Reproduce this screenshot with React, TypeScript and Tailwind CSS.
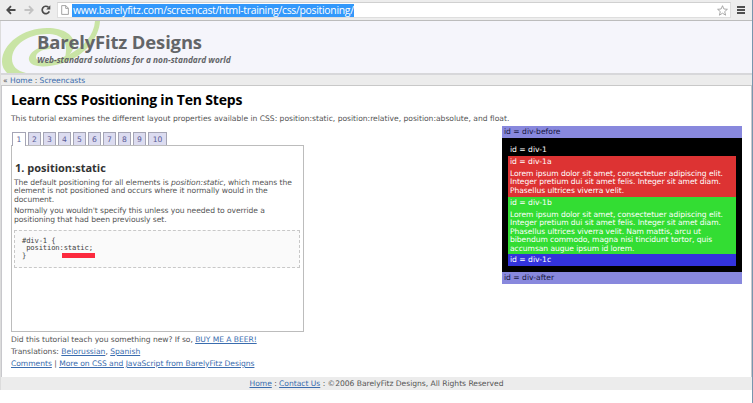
import type { ReactNode } from "react";

const link = "text-[#3a6cae]";
const underlined = "text-[#3a6cae] underline";

function Toolbar() {
  return (
    <div className="flex h-[21px] items-center border-b border-[#bcbcbc] bg-[#ededed]">
      <svg className="ml-[6px] h-[10px] w-[10px]" viewBox="0 0 10 10" fill="none" stroke="#4b4b4b" strokeWidth="1.8">
        <path d="M9.5 5H1.5M5 1.2L1.3 5L5 8.8" />
      </svg>
      <svg className="ml-[8px] h-[10px] w-[10px]" viewBox="0 0 10 10" fill="none" stroke="#c2c2c2" strokeWidth="1.8">
        <path d="M.5 5H8.5M5 1.2L8.7 5L5 8.8" />
      </svg>
      <svg className="ml-[7px] h-[10px] w-[10px]" viewBox="0 0 10 10" fill="none">
        <path d="M8.3 6.4A3.7 3.7 0 1 1 7.4 2.2" stroke="#4b4b4b" strokeWidth="1.7" />
        <path d="M9.3 .3V4.4H5.2Z" fill="#4b4b4b" />
      </svg>
      <div className="ml-[6px] flex h-[16px] w-[674px] items-center border border-t-[#d0d0d0] border-[#dedede] bg-white">
        <svg className="ml-[3px] h-[10px] w-[8px]" viewBox="0 0 8 10" fill="none" stroke="#9a9a9a" strokeWidth=".9">
          <path d="M.7 .6H4.8L7.4 3.2V9.4H.7ZM4.7 .7V3.4H7.3" />
        </svg>
        <span className="ml-[3px] h-[13px] w-[282px] whitespace-nowrap bg-[#3298fb] pl-px font-['Open_Sans',sans-serif] text-[10.4px] leading-[12px] tracking-[-0.28px] text-white">
          www.barelyfitz.com/screencast/html-training/css/positioning/
        </span>
        <svg className="ml-auto mr-[2px] h-[11px] w-[11px]" viewBox="0 0 11 11" fill="none" stroke="#959595" strokeWidth=".8">
          <path d="M5.5 .7L6.9 4L10.4 4.3L7.7 6.6L8.6 10.2L5.5 8.2L2.4 10.2L3.3 6.6L.6 4.3L4.1 4Z" />
        </svg>
      </div>
      <div className="ml-[6px] flex w-[8px] flex-col gap-[1px]">
        <i className="h-[2px] bg-[#4f4f4f]" />
        <i className="h-[2px] bg-[#4f4f4f]" />
        <i className="h-[2px] bg-[#4f4f4f]" />
      </div>
    </div>
  );
}

function Header() {
  return (
    <div className="relative h-[54px] overflow-hidden border-b-2 border-[#d7d7da] bg-[#f5f5fb] pl-[36px] pt-[10px]">
      <svg className="absolute left-0 top-0 h-[52px] w-[110px]" viewBox="0 21 110 52" fill="#c9e4a5">
        <path d="M94 21H99C98 38 84 56 62 63C46 68 30 68 28 60C27 52 39 45 51 46L49 49C41 49 34 53 35 58C37 64 55 61 67 55C83 47 93 35 94 21Z" />
        <path d="M1 62C1 43 23 28 46 28C63 28 74 35 73 46C72 50 70 54 64 58C68 41 61 34 46 34C27 34 11 45 11 59C11 66 16 71 25 73H6C3 70 1 66 1 62Z" />
      </svg>
      <div className="relative whitespace-nowrap font-['Open_Sans',sans-serif] font-bold text-[#636568]">
        <div className="h-[23px] text-[18.4px] leading-[22px] tracking-[-0.12px]">BarelyFitz Designs</div>
        <div className="text-[8.3px] italic leading-[11px]">Web-standard solutions for a non-standard world</div>
      </div>
    </div>
  );
}

const tabs = ["1", "2", "3", "4", "5", "6", "7", "8", "9", "10"];

function Tabs() {
  return (
    <div className="relative z-10 ml-px flex h-[14px] gap-[2px]">
      {tabs.map((t, i) => (
        <span
          key={t}
          className={
            "flex items-center justify-center border border-b-0 border-[#a5a5b5] pt-px text-[7.6px] text-[#5a5a96] " +
            (i === 0 ? "h-[14px] w-[14px] bg-white" : i === 9 ? "h-[13px] w-[19px] bg-[#dcdcf0]" : "h-[13px] w-[13px] bg-[#dcdcf0]")
          }
        >
          {t}
        </span>
      ))}
    </div>
  );
}

function Panel() {
  return (
    <div className="-mt-px h-[187px] w-[293px] border border-[#bcbcbc] pl-[3px] pt-[14px]">
      <h2 className="h-[19px] font-['Open_Sans',sans-serif] text-[11px] font-bold leading-[15px] text-[#333]">1. position:static</h2>
      <div className="-ml-px leading-[8.4px] tracking-[-0.075px]">
        <p>
          The default positioning for all elements is <em>position:static</em>, which means the
          <br />
          element is not positioned and occurs where it normally would in the
          <br />
          document.
        </p>
        <p className="mt-[3px]">
          Normally you wouldn't specify this unless you needed to override a
          <br />
          positioning that had been previously set.
        </p>
      </div>
      <div className="relative -ml-px mt-[6px] h-[38px] w-[286px] border border-dashed border-[#c8c8c8] bg-[#fafafa] pl-[7px] pt-[6px]">
        <pre className="font-['DejaVu_Sans_Mono',monospace] text-[7.2px] leading-[7.3px] tracking-[-0.16px] text-[#444]">{"#div-1 {\n position:static;\n}"}</pre>
        <div className="absolute left-[47px] top-[22px] h-[5px] w-[33px] bg-[#fc2a3e]" />
      </div>
    </div>
  );
}

function Block({ className, children }: { className: string; children: ReactNode }) {
  return <div className={"pl-[2px] leading-[12px] " + className}>{children}</div>;
}

function Demo() {
  return (
    <div className="h-[158px] w-[240px] text-white">
      <Block className="h-[12px] bg-[#8888dd] text-[#161640]">id = div-before</Block>
      <div className="h-[134px] bg-black px-[6px] pt-[6px]">
        <Block className="h-[12px]">id = div-1</Block>
        <Block className="h-[41px] bg-[#dd3333]">
          id = div-1a
          <p className="mt-[2px] leading-[8.4px] tracking-[-0.065px]">
            Lorem ipsum dolor sit amet, consectetuer adipiscing elit.
            <br />
            Integer pretium dui sit amet felis. Integer sit amet diam.
            <br />
            Phasellus ultrices viverra velit.
          </p>
        </Block>
        <Block className="h-[57px] bg-[#33dd33]">
          id = div-1b
          <p className="mt-[2px] leading-[8.4px] tracking-[-0.065px]">
            Lorem ipsum dolor sit amet, consectetuer adipiscing elit.
            <br />
            Integer pretium dui sit amet felis. Integer sit amet diam.
            <br />
            Phasellus ultrices viverra velit. Nam mattis, arcu ut
            <br />
            bibendum commodo, magna nisi tincidunt tortor, quis
            <br />
            accumsan augue ipsum id lorem.
          </p>
        </Block>
        <Block className="h-[12px] bg-[#3333dd]">id = div-1c</Block>
      </div>
      <Block className="h-[12px] bg-[#8888dd] text-[#161640]">id = div-after</Block>
    </div>
  );
}

export default function App() {
  return (
    <div className="h-[403px] w-[753px] overflow-hidden whitespace-nowrap border-r border-[#7896ad] bg-white font-['DejaVu_Sans',Verdana,sans-serif] text-[7.6px] text-[#555]">
      <Toolbar />
      <div className="border-l border-[#dcdcdc]">
        <Header />
        <div className="h-[11px] border-b border-[#c8c8c8] bg-[#ececec] pl-[2px] leading-[11px] tracking-[-0.03px]">
          « <a className={link}>Home</a> : <a className={link}>Screencasts</a>
        </div>
        <div className="h-[291px] border-x border-[#c8c8cc] pl-[9px] pt-[6px]">
          <h1 className="h-[20px] font-['Open_Sans',sans-serif] text-[14px] font-bold leading-[15px] tracking-[-0.2px] text-black">Learn CSS Positioning in Ten Steps</h1>
          <p className="h-[14px] leading-[14px] tracking-[-0.015px]">
            This tutorial examines the different layout properties available in CSS: position:static, position:relative, position:absolute, and float.
          </p>
          <div className="flex justify-between pr-[9px]">
            <div className="pt-[6px]">
              <Tabs />
              <Panel />
              <div className="mt-[2px] leading-[12px]">
                <p className="tracking-[-0.055px]">
                  Did this tutorial teach you something new? If so, <a className={underlined}>BUY ME A BEER!</a>
                </p>
                <p>
                  Translations: <a className={underlined}>Belorussian</a>, <a className={underlined}>Spanish</a>
                </p>
                <p className="tracking-[-0.04px]">
                  <a className={underlined}>Comments</a> | <a className={underlined}>More on CSS and JavaScript from BarelyFitz Designs</a>
                </p>
              </div>
            </div>
            <Demo />
          </div>
        </div>
        <footer className="h-[13px] bg-[#ececec] text-center leading-[13px] tracking-[-0.03px]">
          <a className={underlined}>Home</a> : <a className={underlined}>Contact Us</a> : ©2006 BarelyFitz Designs, All Rights Reserved
        </footer>
      </div>
    </div>
  );
}
